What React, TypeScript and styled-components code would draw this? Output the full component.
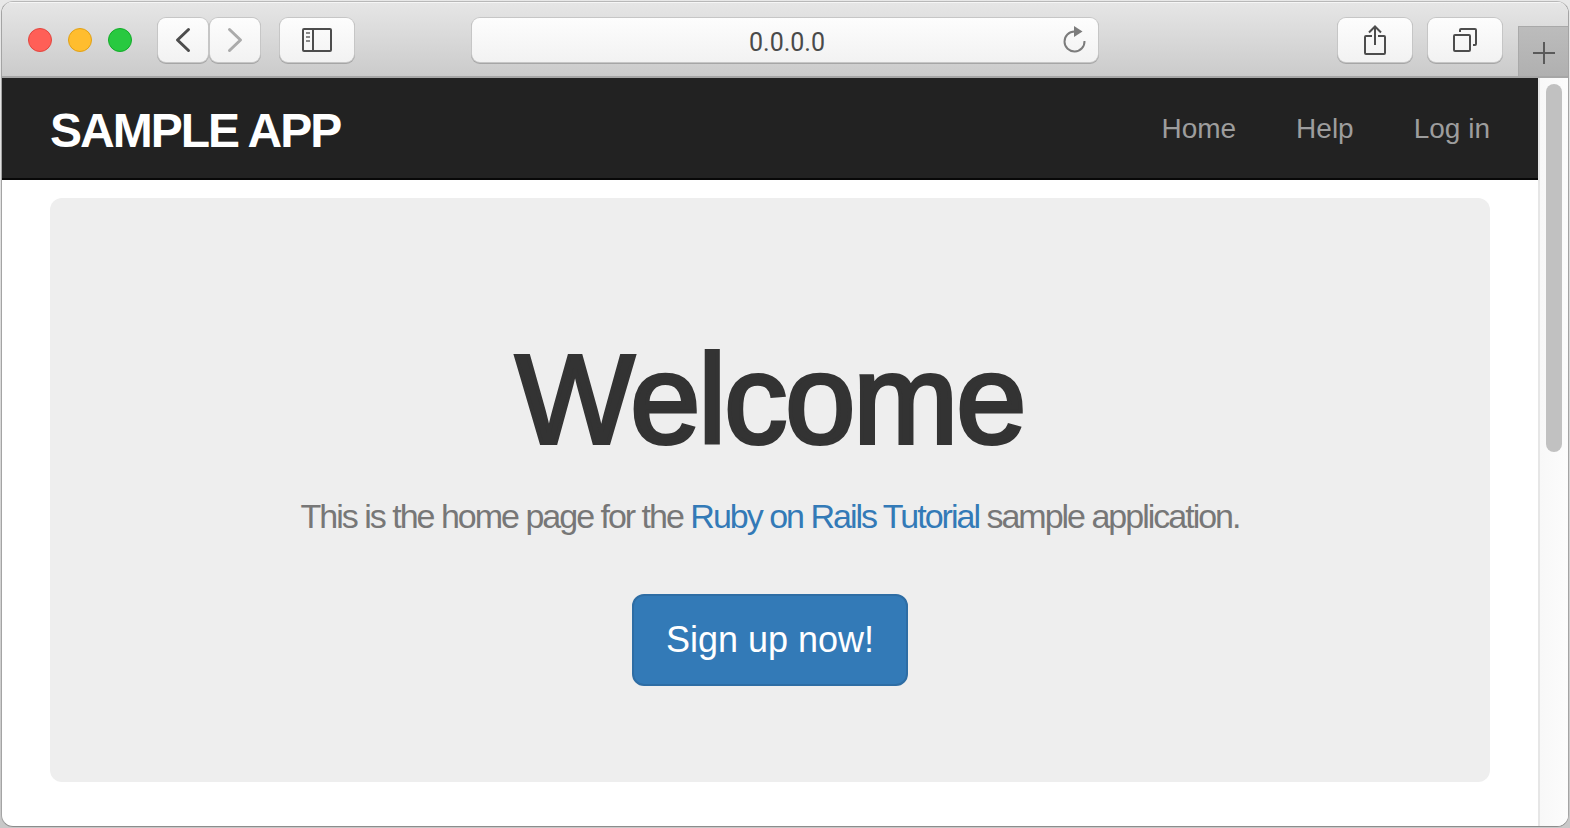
import React from "react";
import styled, { createGlobalStyle } from "styled-components";

const sans = '"Helvetica Neue", "Liberation Sans", Arial, sans-serif';

const GlobalStyle = createGlobalStyle`
  *, *::before, *::after { box-sizing: border-box; }
  body {
    margin: 0;
    font-family: ${sans};
    background: linear-gradient(#e8e8e8, #c8c8c8);
  }
`;

const Desktop = styled.div`
  display: flex;
  min-height: 100vh;
  padding: 1px;
`;

const BrowserWindow = styled.div`
  flex: 1;
  display: flex;
  flex-direction: column;
  min-width: 0;
  overflow: hidden;
  border: 1px solid #acacac;
  border-color: #b8b8b8 #a4a4a4 #8c8c8c #a4a4a4;
  border-radius: 12px;
  background: #fff;
`;

const TitleBar = styled.div`
  display: grid;
  grid-template-columns: 1fr 40% 1fr;
  align-items: center;
  height: 76px;
  padding-top: 2px;
  background: linear-gradient(#e6e6e6, #cbcbcb);
  border-bottom: 2px solid #a6a6a6;
  box-shadow: inset 0 1px 0 #f6f6f6;
`;

const ToolGroup = styled.div<{ $end?: boolean }>`
  display: flex;
  align-items: center;
  justify-content: ${(p) => (p.$end ? "flex-end" : "flex-start")};
  gap: ${(p) => (p.$end ? "16px" : "20px")};
  height: 100%;
  padding-left: ${(p) => (p.$end ? "0" : "26px")};
`;

const TrafficLights = styled.div`
  display: flex;
  gap: 16px;
  margin-right: 6px;
`;

const Light = styled.button<{ $fill: string; $edge: string }>`
  width: 24px;
  height: 24px;
  padding: 0;
  border: 1px solid ${(p) => p.$edge};
  border-radius: 50%;
  background: ${(p) => p.$fill};
`;

const ButtonPair = styled.div`
  display: flex;
  gap: 2px;
`;

const ToolButton = styled.button<{ $wide?: boolean }>`
  display: flex;
  align-items: center;
  justify-content: center;
  width: ${(p) => (p.$wide ? "74px" : "50px")};
  height: 44px;
  padding: 0;
  border: 0;
  border-radius: 8px;
  color: #4d4d4d;
  background: linear-gradient(#fdfdfd, #f2f2f2);
  box-shadow: 0 0 0 1px #c6c6c6, 0 1px 0 1px #a6a6a6;

  &:disabled { color: #ababab; }
`;

const AddressBar = styled.form`
  position: relative;
  height: 44px;
  border-radius: 8px;
  background: linear-gradient(#fdfdfd, #f2f2f2);
  box-shadow: 0 0 0 1px #c6c6c6, 0 1px 0 1px #a6a6a6;
`;

const AddressInput = styled.input`
  width: 100%;
  height: 100%;
  padding: 4px 38px 0 42px;
  border: 0;
  outline: 0;
  background: transparent;
  color: #4a4a4a;
  font-family: Roboto, sans-serif;
  font-size: 25px;
  text-align: center;
`;

const ReloadButton = styled.button`
  position: absolute;
  top: 8px;
  right: 11px;
  width: 24px;
  height: 28px;
  padding: 0;
  border: 0;
  background: none;
  color: #7c7c7c;

  svg { display: block; }
`;

const NewTabButton = styled.button`
  display: flex;
  align-items: center;
  justify-content: center;
  align-self: flex-end;
  width: 50px;
  height: 50px;
  padding: 2px 0 0;
  border: 1px solid #a9a9a9;
  border-width: 1px 0 0 1px;
  background: linear-gradient(#bcbcbc, #b0b0b0);
  color: #5a5a5a;
`;

const Viewport = styled.div`
  flex: 1;
  display: flex;
`;

const Page = styled.div`
  flex: 1;
  min-width: 0;
`;

const ScrollTrack = styled.div`
  width: 30px;
  padding: 6px;
  border-left: 2px solid #e6e6e6;
  background: linear-gradient(90deg, #f8f8f8, #fcfcfc);
`;

const ScrollThumb = styled.div`
  width: 16px;
  height: 50%;
  border-radius: 8px;
  background: #c1c1c1;
`;

const Navbar = styled.header`
  display: flex;
  align-items: center;
  justify-content: space-between;
  height: 102px;
  padding: 0 48px;
  background: #222;
  border-bottom: 2px solid #080808;
`;

const Logo = styled.a`
  padding-top: 6px;
  color: #fff;
  font-size: 48px;
  font-weight: 700;
  line-height: 48px;
  letter-spacing: -2px;
  text-decoration: none;
  text-transform: uppercase;
  white-space: nowrap;
`;

const NavLinks = styled.nav`
  display: flex;
  gap: 60px;
  padding-top: 2px;
`;

const NavLink = styled.a`
  color: #9d9d9d;
  font-size: 28px;
  line-height: 40px;
  text-decoration: none;
`;

const Jumbotron = styled.main`
  display: flex;
  flex-direction: column;
  align-items: center;
  margin: 18px 48px 44px;
  padding: 132px 48px 96px;
  border-radius: 12px;
  background: #eee;
  text-align: center;
`;

const Title = styled.h1`
  margin: 0 0 20px;
  color: #333;
  font-size: 126px;
  font-weight: 400;
  line-height: 140px;
  letter-spacing: -2px;
  -webkit-text-stroke: 4px #333;
`;

const Lead = styled.p`
  margin: 0 0 52px;
  color: #777;
  font-size: 34px;
  line-height: 52px;
  letter-spacing: -2px;

  a {
    color: #337ab7;
    text-decoration: none;
  }
`;

const SignUpLink = styled.a`
  padding: 20px 32px;
  border: 2px solid #2e6da4;
  border-radius: 12px;
  background: #337ab7;
  color: #fff;
  font-size: 36px;
  line-height: 48px;
  text-decoration: none;
`;

const BackIcon = () => (
  <svg width="16" height="26" viewBox="0 0 16 26" fill="none" stroke="currentColor" strokeWidth="3" strokeLinecap="round" strokeLinejoin="round">
    <path d="M13.5 2.5 2.5 13l11 10.5" />
  </svg>
);

const ForwardIcon = () => (
  <svg width="16" height="26" viewBox="0 0 16 26" fill="none" stroke="currentColor" strokeWidth="3" strokeLinecap="round" strokeLinejoin="round">
    <path d="M2.5 2.5 13.5 13l-11 10.5" />
  </svg>
);

const SidebarIcon = () => (
  <svg width="30" height="24" viewBox="0 0 30 24" fill="none" stroke="currentColor" strokeWidth="2">
    <rect x="1" y="1" width="28" height="22" rx="1" />
    <path d="M11 1v22" />
    <path d="M4 5h4M4 9h4M4 13h4" stroke="#8a8a8a" />
  </svg>
);

const ReloadIcon = () => (
  <svg width="24" height="28" viewBox="0 0 24 28" fill="none">
    <path d="M11.500 5.500 A10 10 0 1 0 21.500 15" stroke="currentColor" strokeWidth="2" />
    <path d="M11 0l8.500 5.500L11 11z" fill="currentColor" />
  </svg>
);

const ShareIcon = () => (
  <svg width="22" height="32" viewBox="0 0 22 32" fill="none" stroke="currentColor" strokeWidth="2">
    <path d="M8 12H2a1 1 0 0 0-1 1v16a1 1 0 0 0 1 1h18a1 1 0 0 0 1-1V13a1 1 0 0 0-1-1h-6" />
    <path d="M11 21V3M5 8.500l6-6 6 6" />
  </svg>
);

const TabsIcon = () => (
  <svg width="24" height="24" viewBox="0 0 24 24" fill="none" stroke="currentColor" strokeWidth="2">
    <rect x="1" y="7" width="16" height="16" rx="1" />
    <path d="M7 4V2a1 1 0 0 1 1-1h14a1 1 0 0 1 1 1v14a1 1 0 0 1-1 1h-2" />
  </svg>
);

const PlusIcon = () => (
  <svg width="22" height="22" viewBox="0 0 22 22" fill="none" stroke="currentColor" strokeWidth="2">
    <path d="M11 0v22M0 11h22" />
  </svg>
);

export default function App() {
  return (
    <>
      <GlobalStyle />
      <Desktop>
        <BrowserWindow>
          <TitleBar>
            <ToolGroup>
              <TrafficLights>
                <Light $fill="#ff5f57" $edge="#e2463f" aria-label="Close" />
                <Light $fill="#ffbd2e" $edge="#e1a116" aria-label="Minimize" />
                <Light $fill="#28c940" $edge="#12ac28" aria-label="Zoom" />
              </TrafficLights>
              <ButtonPair>
                <ToolButton aria-label="Back"><BackIcon /></ToolButton>
                <ToolButton aria-label="Forward" disabled><ForwardIcon /></ToolButton>
              </ButtonPair>
              <ToolButton $wide aria-label="Show sidebar"><SidebarIcon /></ToolButton>
            </ToolGroup>
            <AddressBar onSubmit={(e) => e.preventDefault()}>
              <AddressInput type="text" aria-label="Address" defaultValue="0.0.0.0" />
              <ReloadButton type="button" aria-label="Reload"><ReloadIcon /></ReloadButton>
            </AddressBar>
            <ToolGroup $end>
              <ToolButton $wide aria-label="Share"><ShareIcon /></ToolButton>
              <ToolButton $wide aria-label="Show all tabs"><TabsIcon /></ToolButton>
              <NewTabButton aria-label="New tab"><PlusIcon /></NewTabButton>
            </ToolGroup>
          </TitleBar>
          <Viewport>
            <Page>
              <Navbar>
                <Logo href="#">sample app</Logo>
                <NavLinks>
                  <NavLink href="#">Home</NavLink>
                  <NavLink href="#">Help</NavLink>
                  <NavLink href="#">Log in</NavLink>
                </NavLinks>
              </Navbar>
              <Jumbotron>
                <Title>Welcome</Title>
                <Lead>
                  This is the home page for the <a href="#">Ruby on Rails Tutorial</a> sample application.
                </Lead>
                <SignUpLink href="#">Sign up now!</SignUpLink>
              </Jumbotron>
            </Page>
            <ScrollTrack>
              <ScrollThumb />
            </ScrollTrack>
          </Viewport>
        </BrowserWindow>
      </Desktop>
    </>
  );
}
